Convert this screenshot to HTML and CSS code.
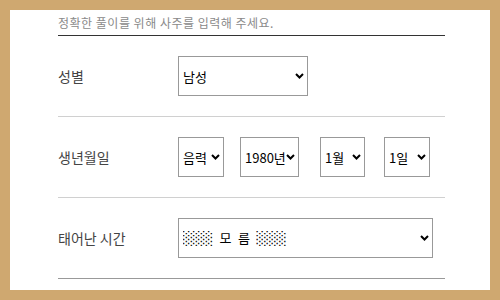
FILE: index.html
```html
<!DOCTYPE html>
<html>
<head>
    <meta charset="utf-8">
    <title>사주 입력</title>
    <link rel="stylesheet" href="styles.css">
</head>
<body>
    <div class="container">
        <div class="header">
            <p class="notice">정확한 풀이를 위해 사주를 입력해 주세요.</p>
        </div>

        <div class="form-row">
            <label class="form-label">성별</label>
            <div class="form-field">
                <select class="sel-gender">
                    <option>남성</option>
                    <option>여성</option>
                </select>
            </div>
        </div>

        <div class="form-row">
            <label class="form-label">생년월일</label>
            <div class="form-field">
                <select class="sel-cal">
                    <option>음력</option>
                    <option>양력</option>
                </select>
                <select class="sel-year">
                    <option>1980년</option>
                </select>
                <select class="sel-month">
                    <option>1월</option>
                </select>
                <select class="sel-day">
                    <option>1일</option>
                </select>
            </div>
        </div>

        <div class="form-row last">
            <label class="form-label">태어난 시간</label>
            <div class="form-field">
                <select class="sel-time">
                    <option>░░░&ensp;모&ensp;름&ensp;░░░</option>
                </select>
            </div>
        </div>
    </div>
</body>
</html>
```

FILE: styles.css
```css
body {
    margin: 0;
    padding: 10px;
    background-color: #cfa870;
    font-family: "Noto Sans CJK KR", "DejaVu Sans", sans-serif;
}
.container {
    background: white;
    height: 280px;
    padding: 0 45px 0 48px;
    box-sizing: border-box;
}
.header {
    height: 26px;
    border-bottom: 1px solid #333;
    box-sizing: border-box;
}
.notice {
    margin: 0;
    padding-top: 5px;
    font-size: 12px;
    line-height: 16px;
    color: #8a8a8a;
    letter-spacing: 0.5px;
}
.form-row {
    display: flex;
    align-items: center;
    height: 81px;
    border-bottom: 1px solid #d0d0d0;
    box-sizing: border-box;
}
.form-row.last {
    border-bottom-color: #999;
}
.form-label {
    width: 120px;
    font-size: 14px;
    color: #444;
}
.form-field {
    display: flex;
    align-items: center;
}
select {
    -webkit-appearance: none;
    appearance: none;
    height: 40px;
    border: 1px solid #999;
    border-radius: 0;
    font-family: "Noto Sans CJK KR", "DejaVu Sans", sans-serif;
    font-size: 13px;
    color: #000;
    padding: 0 12px 0 4px;
    background: white url("data:image/svg+xml,%3Csvg xmlns='http://www.w3.org/2000/svg' width='9' height='6'%3E%3Cpath d='M1 1l3.5 3.5L8 1' fill='none' stroke='%23000' stroke-width='2'/%3E%3C/svg%3E") no-repeat right 3px center;
}
.sel-gender { width: 130px; }
.sel-cal { width: 46px; margin-right: 16px; }
.sel-year { width: 59px; margin-right: 21px; }
.sel-month { width: 45px; margin-right: 19px; }
.sel-day { width: 46px; }
.sel-time {
    width: 255px;
    font-family: "DejaVu Sans", "Noto Sans CJK KR", sans-serif;
}
```
